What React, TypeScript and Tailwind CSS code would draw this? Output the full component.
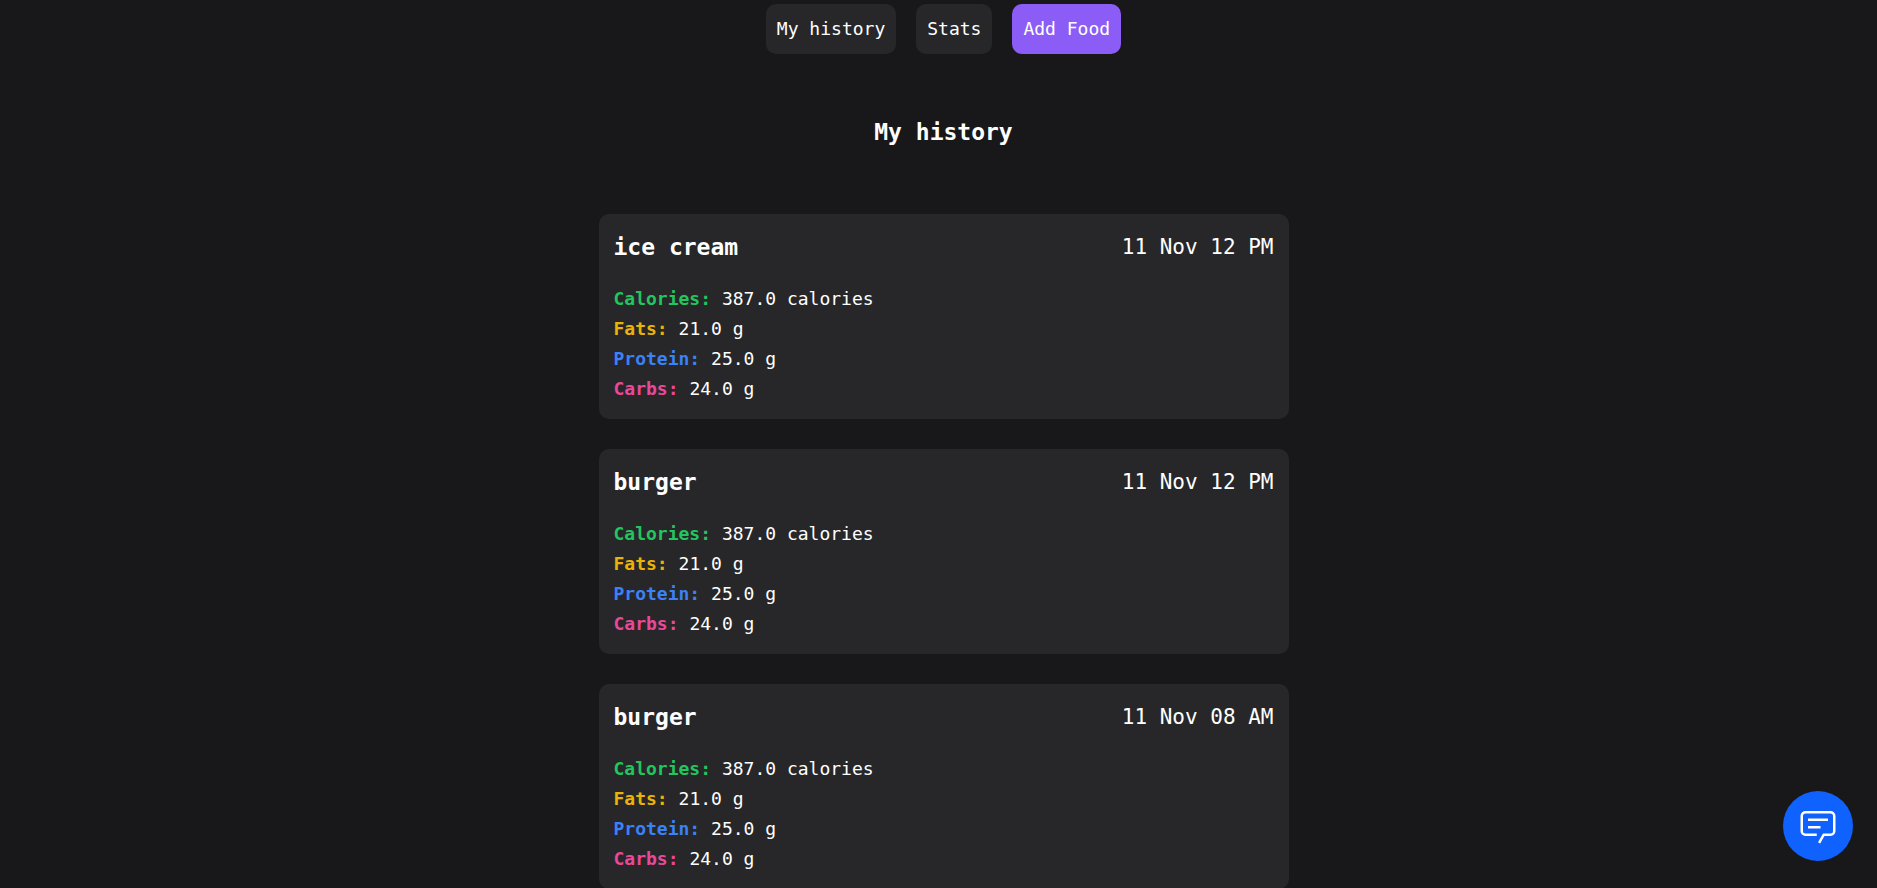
type Entry = {
  id: number;
  name: string;
  date: string;
  calories: string;
  fats: string;
  protein: string;
  carbs: string;
};

const entries: Entry[] = [
  { id: 1, name: 'ice cream', date: '11 Nov 12 PM', calories: '387.0', fats: '21.0', protein: '25.0', carbs: '24.0' },
  { id: 2, name: 'burger', date: '11 Nov 12 PM', calories: '387.0', fats: '21.0', protein: '25.0', carbs: '24.0' },
  { id: 3, name: 'burger', date: '11 Nov 08 AM', calories: '387.0', fats: '21.0', protein: '25.0', carbs: '24.0' },
];

function Nutrient({ label, value, color }: { label: string; value: string; color: string }) {
  return (
    <li>
      <span className={`font-bold ${color}`}>{label}:</span> {value}
    </li>
  );
}

function EntryCard({ entry }: { entry: Entry }) {
  return (
    <article className="rounded-[10px] bg-[#27272a] p-[15px]">
      <header className="mb-[18px] flex items-center justify-between leading-[37px]">
        <h2 className="text-[23px] font-bold">{entry.name}</h2>
        <time className="text-[21px]">{entry.date}</time>
      </header>
      <ul>
        <Nutrient label="Calories" value={`${entry.calories} calories`} color="text-[#22c55e]" />
        <Nutrient label="Fats" value={`${entry.fats} g`} color="text-[#eab308]" />
        <Nutrient label="Protein" value={`${entry.protein} g`} color="text-[#3b82f6]" />
        <Nutrient label="Carbs" value={`${entry.carbs} g`} color="text-[#ec4899]" />
      </ul>
    </article>
  );
}

export default function App() {
  return (
    <div className="flex min-h-screen flex-col items-center bg-[#18181b] pt-1 pl-[10px] font-['Consolas','DejaVu_Sans_Mono',monospace] text-[18px] leading-[30px] text-white">
      <nav className="flex gap-5">
        <a href="#history" className="rounded-[10px] bg-[#27272a] px-[11px] py-[10px]">My history</a>
        <a href="#stats" className="rounded-[10px] bg-[#27272a] px-[11px] py-[10px]">Stats</a>
        <a href="#add" className="rounded-[10px] bg-[#8b5cf6] px-[11px] py-[10px]">Add Food</a>
      </nav>

      <main className="w-full max-w-[690px]">
        <h1 className="mt-[60px] mb-16 text-center text-[23px] leading-9 font-bold">My history</h1>
        <div className="flex flex-col gap-[30px]">
          {entries.map((entry) => (
            <EntryCard key={entry.id} entry={entry} />
          ))}
        </div>
      </main>

      <button
        type="button"
        aria-label="Open chat"
        className="fixed right-6 bottom-[27px] flex size-[70px] items-center justify-center rounded-full bg-[#0f62fe]"
      >
        <svg viewBox="0 0 32 32" className="size-10 fill-white" aria-hidden="true">
          <path d="M17.74,30,16,29l4-7h6a2,2,0,0,0,2-2V8a2,2,0,0,0-2-2H6A2,2,0,0,0,4,8V20a2,2,0,0,0,2,2h9v2H6a4,4,0,0,1-4-4V8A4,4,0,0,1,6,4H26a4,4,0,0,1,4,4V20a4,4,0,0,1-4,4H21.16Z" />
          <path d="M8 10h16v2H8zM8 16h10v2H8z" />
        </svg>
      </button>
    </div>
  );
}
